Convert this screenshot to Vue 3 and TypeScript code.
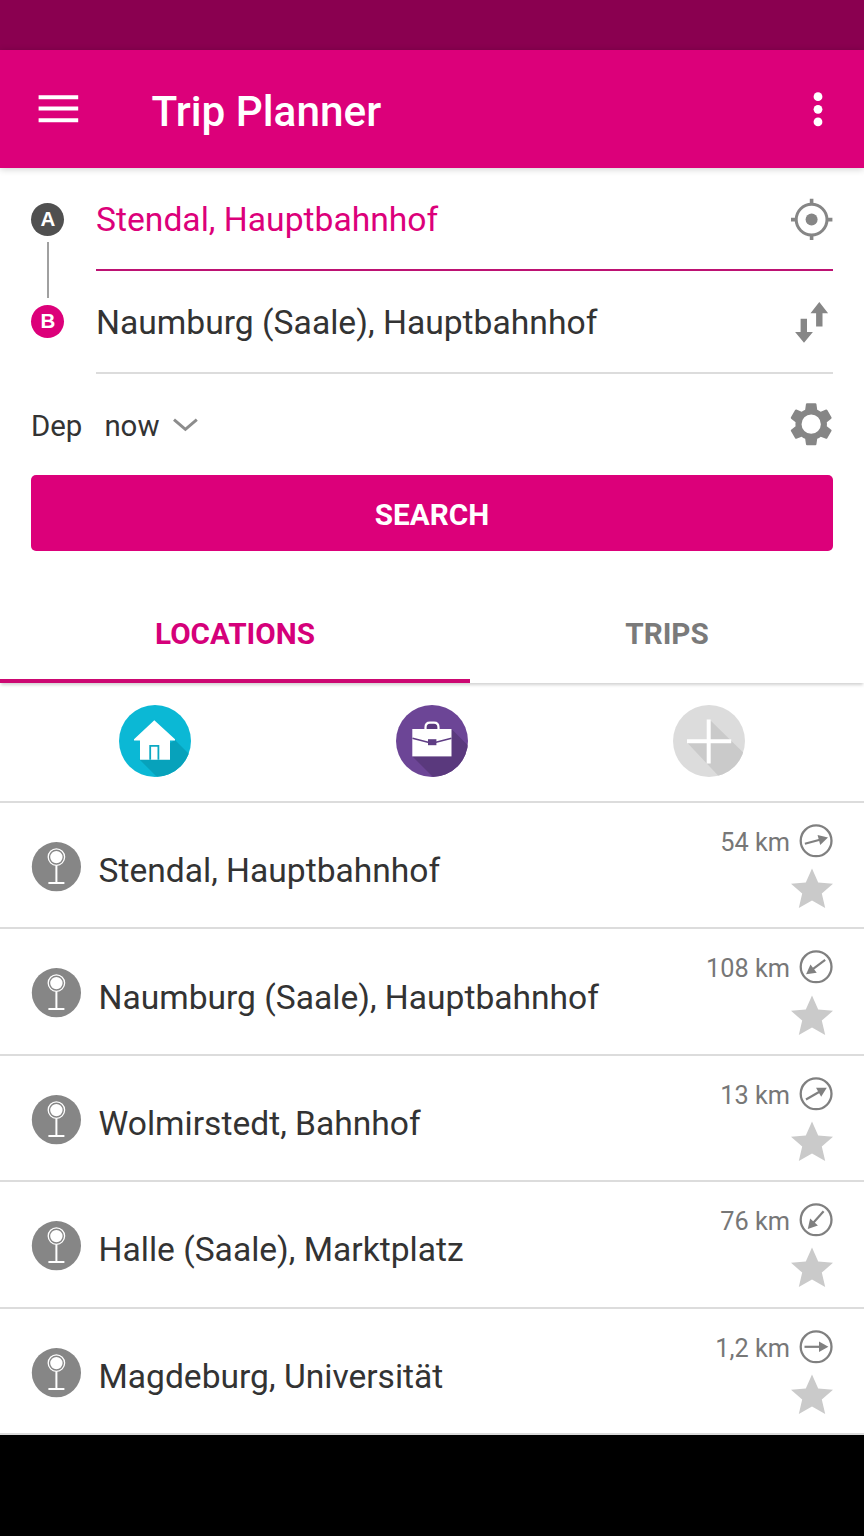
<script setup lang="ts">
interface Place {
  name: string
  distance: string
  bearing: number
}

const places: Place[] = [
  { name: 'Stendal, Hauptbahnhof', distance: '54 km', bearing: -15 },
  { name: 'Naumburg (Saale), Hauptbahnhof', distance: '108 km', bearing: 143 },
  { name: 'Wolmirstedt, Bahnhof', distance: '13 km', bearing: -29.5 },
  { name: 'Halle (Saale), Marktplatz', distance: '76 km', bearing: 131.5 },
  { name: 'Magdeburg, Universität', distance: '1,2 km', bearing: 0 },
]
</script>

<template>
  <div class="screen">
    <div class="status"></div>
    <header class="bar">
      <svg class="menu" width="41" height="28" viewBox="0 0 41 28">
        <path d="M0.6 2.2H40.2M0.6 13.6H40.2M0.6 25.2H40.2" stroke="#fff" stroke-width="4" />
      </svg>
      <h1>Trip Planner</h1>
      <svg class="more" width="10" height="36" viewBox="0 0 10 36">
        <g fill="#fff">
          <circle cx="5" cy="5.7" r="4.4" />
          <circle cx="5" cy="18.3" r="4.4" />
          <circle cx="5" cy="30.9" r="4.4" />
        </g>
      </svg>
    </header>

    <section class="form">
      <div class="route">
        <div class="ends">
          <span class="badge">A</span>
          <span class="link"></span>
          <span class="badge to">B</span>
        </div>
        <div class="fields">
          <div class="field active">
            <span>Stendal, Hauptbahnhof</span>
            <svg width="42" height="42" viewBox="0 0 42 42">
              <g transform="translate(-0.4 0.6)">
                <circle cx="21" cy="21" r="15.4" fill="none" stroke="#868686" stroke-width="3" />
                <circle cx="21" cy="21" r="6" fill="#868686" />
                <path d="M21 0.2V6M21 36V41.4M0.4 21H6M36 21H41.8" stroke="#868686" stroke-width="3.6" />
              </g>
            </svg>
          </div>
          <div class="field">
            <span>Naumburg (Saale), Hauptbahnhof</span>
            <svg width="42" height="42" viewBox="0 0 42 42">
              <path
                transform="translate(-0.7 0.1)"
                d="M10.3 17.6h6.4v13.2h5.9L13.7 41.6 4.8 30.8h5.5zM29 1l8.8 11.2h-5.6v13.2h-6.4V12.2h-5.6z"
                fill="#868686"
              />
            </svg>
          </div>
        </div>
      </div>
      <div class="options">
        <span>Dep</span>
        <span class="now">now</span>
        <svg class="chevron" width="25" height="14" viewBox="0 0 25 14">
          <path d="M1 1.7L12.4 11.3L23.8 1.7" fill="none" stroke="#8c8c8c" stroke-width="3" />
        </svg>
        <svg class="gear" width="50.4" height="50.4" viewBox="0 0 24 24">
          <path
            fill="#868686"
            d="M19.43 12.98c.04-.32.07-.64.07-.98s-.03-.66-.07-.98l2.11-1.65c.19-.15.24-.42.12-.64l-2-3.46c-.12-.22-.39-.3-.61-.22l-2.49 1c-.52-.4-1.08-.73-1.69-.98l-.38-2.65C14.46 2.18 14.25 2 14 2h-4c-.25 0-.46.18-.49.42l-.38 2.65c-.61.25-1.17.59-1.69.98l-2.49-1c-.23-.09-.49 0-.61.22l-2 3.46c-.13.22-.07.49.12.64l2.11 1.65c-.04.32-.07.65-.07.98s.03.66.07.98l-2.11 1.65c-.19.15-.24.42-.12.64l2 3.46c.12.22.39.3.61.22l2.49-1c.52.4 1.08.73 1.69.98l.38 2.65c.03.24.24.42.49.42h4c.25 0 .46-.18.49-.42l.38-2.65c.61-.25 1.17-.59 1.69-.98l2.49 1c.23.09.49 0 .61-.22l2-3.46c.12-.22.07-.49-.12-.64l-2.11-1.65zM12 16.6a4.6 4.6 0 1 1 0-9.2 4.6 4.6 0 0 1 0 9.2z"
          />
        </svg>
      </div>
      <button class="search">SEARCH</button>
    </section>

    <nav class="tabs">
      <div class="tab on">LOCATIONS</div>
      <div class="tab">TRIPS</div>
    </nav>

    <section class="quick">
      <svg width="72" height="72" viewBox="0 0 72 72">
        <clipPath id="disc"><circle cx="36" cy="36" r="36" /></clipPath>
        <circle cx="36" cy="36" r="36" fill="#0bb8d5" />
        <path d="M56 35L90 69V90H56L20.5 54.5L48 40z" fill="#07a2bb" clip-path="url(#disc)" />
        <path d="M35.3 15.3L56 34.3V35.5H51V54.7H21V35.5H15V34.3z" fill="#fff" />
        <path d="M31.2 54.7V40.8H39.4V54.7" fill="none" stroke="#0ba9c3" stroke-width="1.8" />
      </svg>
      <svg width="72" height="72" viewBox="0 0 72 72">
        <circle cx="36" cy="36" r="36" fill="#6c4596" />
        <path d="M55.5 24L90 58.5V90H55L16.5 51.5z" fill="#5a397d" clip-path="url(#disc)" />
        <path
          d="M29.5 25V22.5C29.5 19.5 31 17.7 34 17.7H38C41 17.7 42.5 19.5 42.5 22.5V25"
          fill="#5a397d"
          stroke="#fff"
          stroke-width="2.2"
        />
        <rect x="16.3" y="24" width="39.2" height="27.4" fill="#fff" />
        <path d="M16.5 33.3L32 37.2H40L55.5 33.3" fill="none" stroke="#5f3d84" stroke-width="1.7" />
        <rect x="32" y="34.2" width="8.4" height="6" fill="#5f3d84" />
      </svg>
      <svg width="72" height="72" viewBox="0 0 72 72">
        <circle cx="36" cy="36" r="36" fill="#dcdcdc" />
        <path d="M37 15L80 57V80H54L14 37.5H34z" fill="#cacaca" clip-path="url(#disc)" />
        <path d="M35.7 14.5V58.5M14 36.2H58.2" stroke="#fff" stroke-width="4" />
      </svg>
    </section>

    <main class="list">
      <article v-for="place in places" :key="place.name" class="row">
        <svg class="stop" width="50" height="50" viewBox="0 0 50 50">
          <circle cx="25.4" cy="24.7" r="24.6" fill="#868686" />
          <circle cx="25.4" cy="15.1" r="8.2" fill="none" stroke="#fff" stroke-width="1.3" />
          <circle cx="25.4" cy="15.1" r="6.2" fill="#fff" />
          <path d="M25.4 23.5V41M17.4 41H33.4" fill="none" stroke="#fff" stroke-width="2" />
        </svg>
        <span class="name">{{ place.name }}</span>
        <div class="meta">
          <div class="distance">
            <span>{{ place.distance }}</span>
            <svg width="34" height="34" viewBox="0 0 34 34">
              <circle cx="17.1" cy="16.8" r="15.4" fill="none" stroke="#808080" stroke-width="2.3" />
              <g :transform="`rotate(${place.bearing} 17 16.8)`">
                <path d="M5.5 16.8H21" stroke="#808080" stroke-width="2.2" />
                <path d="M20 11.6L29.4 16.8L20 22z" fill="#808080" />
              </g>
            </svg>
          </div>
          <svg class="star" width="42" height="40" viewBox="0 0 42 40">
            <path
              d="M21 .5L27.2 14.6L42 15.8L30.8 25.6L34.2 40L21 32.4L7.8 40L11.2 25.6L0 15.8L14.8 14.6z"
              fill="#cacaca"
            />
          </svg>
        </div>
      </article>
    </main>
    <div class="navbar"></div>
  </div>
</template>

<style>
body {
  background: #fff;
}
</style>

<style scoped>
.screen {
  width: 864px;
  height: 1536px;
  overflow: hidden;
  display: flex;
  flex-direction: column;
  background: #fff;
  color: #333;
  font-family: Roboto, 'Noto Sans', sans-serif;
}
svg {
  display: block;
  flex: none;
}
.status {
  height: 50px;
  background: #8a0050;
}
.bar {
  height: 118px;
  flex: none;
  box-sizing: border-box;
  padding: 0 41px 0 38px;
  display: flex;
  align-items: center;
  background: #dc007a;
  box-shadow: 0 1px 7px rgba(0, 0, 0, 0.2);
}
h1 {
  flex: 1;
  margin: 5px 0 0 72.5px;
  color: #fff;
  font-size: 42.3px;
  line-height: 50px;
  font-weight: 500;
}
.form {
  height: 417px;
  flex: none;
  box-sizing: border-box;
  padding: 0 31px;
}
.route {
  display: flex;
  height: 206px;
}
.ends {
  width: 65px;
  padding-top: 34.5px;
  display: flex;
  flex-direction: column;
}
.badge {
  width: 33px;
  height: 33px;
  margin-left: 0.4px;
  border-radius: 50%;
  background: #505050;
  color: #fff;
  font: 700 20.5px/31px 'Liberation Sans', Arial, sans-serif;
  text-align: center;
}
.badge.to {
  background: #dc007a;
}
.link {
  width: 2px;
  height: 56px;
  margin: 6.5px 0 6.8px 16.4px;
  background: #a0a0a0;
}
.fields {
  flex: 1;
}
.field {
  height: 103px;
  box-sizing: border-box;
  display: flex;
  justify-content: space-between;
  align-items: center;
  border-bottom: 2px solid #dcdcdc;
  font-size: 33.65px;
  line-height: 40px;
}
.field > span {
  padding-top: 2px;
}
.field.active {
  color: #dc007a;
  border-color: #bd1273;
}
.options {
  height: 101px;
  display: flex;
  align-items: center;
  font-size: 29.4px;
  line-height: 36px;
}
.options > span {
  margin-top: 2px;
}
.options > .now {
  margin-left: 22px;
}
.chevron {
  margin-left: 14px;
}
.gear {
  margin: 0 -3.8px 0 auto;
}
.search {
  display: block;
  width: 802px;
  height: 76px;
  padding: 3px 0 0;
  border: 0;
  border-radius: 5px;
  background: #dc007a;
  color: #fff;
  font: 700 29.7px/36px Roboto, sans-serif;
}
.tabs {
  height: 98px;
  flex: none;
  display: grid;
  grid-template-columns: 470px 1fr;
  box-shadow: 0 3px 3px -1px rgba(0, 0, 0, 0.18);
}
.tab {
  box-sizing: border-box;
  padding-top: 31px;
  text-align: center;
  color: #7a7a7a;
  font-size: 29.7px;
  line-height: 36px;
  font-weight: 700;
}
.tab.on {
  color: #d5007a;
  border-bottom: 4px solid #cc0872;
}
.quick {
  height: 120px;
  flex: none;
  box-sizing: border-box;
  padding: 22.4px 119px 0;
  display: flex;
  justify-content: space-between;
  border-bottom: 2px solid #dcdcdc;
}
.row {
  height: 126.4px;
  box-sizing: border-box;
  padding: 0 31px;
  display: flex;
  border-bottom: 2px solid #dcdcdc;
}
.stop {
  margin-top: 39px;
}
.name {
  flex: 1;
  margin: 48.2px 0 0 17.5px;
  font-size: 33.6px;
  line-height: 40px;
}
.meta {
  padding-top: 21px;
  display: flex;
  flex-direction: column;
  align-items: flex-end;
}
.distance {
  height: 36px;
  display: flex;
  gap: 9px;
  color: #777;
  font-size: 25.3px;
  line-height: 38px;
}
.star {
  margin: 8.3px 0.5px 0 0;
}
.navbar {
  flex: 1;
  background: #000;
}
</style>
